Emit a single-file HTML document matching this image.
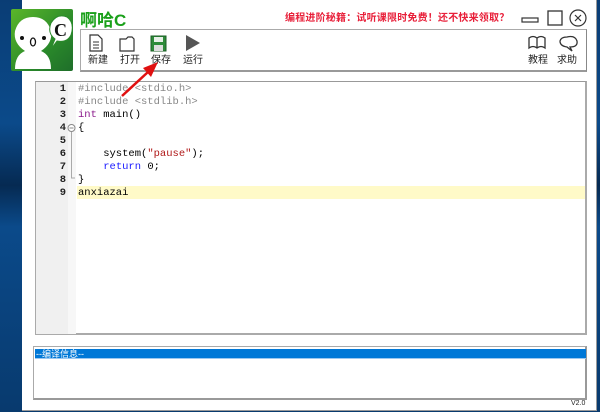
<!DOCTYPE html>
<html><head><meta charset="utf-8"><style>
*{margin:0;padding:0;box-sizing:border-box}
body{width:600px;height:412px;overflow:hidden;position:relative;background:linear-gradient(180deg,#0a3d75 0%,#0b4a8a 30%,#062a52 45%,#0b4a8a 55%,#083a6e 100%);font-family:"Liberation Sans","Noto Sans CJK SC",sans-serif}
.win{position:absolute;left:22px;top:0;width:575px;height:411px;background:#fff;border-right:1px solid #999;border-bottom:1px solid #999}
.abs{position:absolute}
.logo{left:11px;top:9px;width:62px;height:62px;background:linear-gradient(135deg,#5bb62a,#2a8a2a 60%,#1f6e2a);border-radius:2px}
.title{left:80px;top:6px;font-size:17px;font-weight:bold;color:#1aa01a;font-family:"Liberation Sans","Noto Sans CJK SC",sans-serif}
.ad{left:285px;top:9px;font-size:10px;color:#e8203a;font-weight:bold;letter-spacing:0.2px}
.tb{left:80px;top:29px;width:507px;height:43px;border:1px solid #aaa;border-right-color:#888;border-bottom:2px solid #999;background:#fff}
.btn{position:absolute;top:51px;font-size:10px;color:#222}
.editor{left:35px;top:81px;width:552px;height:254px;border:1px solid #aaa;border-top-color:#999;border-right:2px solid #aaa;border-bottom:2px solid #aaa;background:#fff}
.gut{left:36px;top:82px;width:32px;height:252px;background:#f0f0f0}
.fold{left:68px;top:82px;width:8px;height:252px;background:#f7f7f7}
.code{left:78px;top:83px;font-family:"Liberation Mono",monospace;font-size:10.5px;line-height:13px;white-space:pre;color:#000}
.nums{left:40px;top:83px;width:26px;text-align:right;white-space:pre;font-family:"Liberation Mono",monospace;font-size:10.5px;line-height:13px;font-weight:bold;color:#222}
.g{color:#888}.k{color:#8b1a8b}.b{color:#1a1aff}.s{color:#b01818}
.out{left:33px;top:346px;width:554px;height:54px;border:1px solid #aaa;border-right:2px solid #999;border-bottom:2px solid #999;background:#fff}
.hdr{left:35px;top:349px;width:551px;height:10px;background:#0078d7;border-bottom:1px solid #9cc8f0;color:#fff;font-size:9px;line-height:10px;padding-left:1px}
</style></head><body>
<div class="win"></div>
<div class="abs logo">
<svg width="62" height="62" viewBox="0 0 62 62">
<path d="M4 60 Q4 46 14 42 Q2 34 4 22 Q8 8 22 8 Q36 8 40 22 Q42 34 30 42 Q40 46 40 60 Z" fill="#fff"/>
<circle cx="11" cy="29" r="2" fill="#111"/><circle cx="33" cy="29" r="2" fill="#111"/>
<ellipse cx="22" cy="33" rx="2.5" ry="4" fill="none" stroke="#111" stroke-width="1.3"/>
<path d="M40 40 L44 30 Q36 24 40 14 Q46 4 56 8 Q64 14 60 26 Q56 34 46 32 Z" fill="#fff" stroke="#2a8a2a" stroke-width="1"/>
<text x="43" y="27" font-family="Liberation Serif,serif" font-size="18" font-weight="bold" fill="#111">C</text>
</svg></div>
<div class="abs title">啊哈C</div>
<div class="abs ad">编程进阶秘籍：试听课限时免费！还不快来领取？</div>
<svg class="abs" style="left:520px;top:8px" width="70" height="22" viewBox="0 0 70 22">
<rect x="2" y="10" width="16" height="4" fill="none" stroke="#333" stroke-width="1.2"/>
<rect x="28" y="3" width="14" height="14" fill="none" stroke="#333" stroke-width="1.3"/>
<circle cx="58" cy="10" r="8" fill="none" stroke="#333" stroke-width="1.2"/>
<path d="M55 7 L61 13 M61 7 L55 13" stroke="#333" stroke-width="1.2"/>
</svg>
<div class="abs tb"></div>
<svg class="abs" style="left:86px;top:33px" width="120" height="20" viewBox="0 0 120 20">
<path d="M4 2 H12 L16 6 V18 H4 Z" fill="#fff" stroke="#333" stroke-width="1.2"/>
<path d="M7 9 H13 M7 12 H13 M7 15 H13" stroke="#333"/>
<path d="M34 6 H40 L42 4 H46 L48 6 V18 H34 Z" fill="#fff" stroke="#333" stroke-width="1.2"/>
<rect x="65" y="3" width="15" height="15" fill="#2e8b3a" stroke="#1b5e24"/>
<rect x="68" y="4" width="9" height="5" fill="#e8f0e8"/><rect x="68" y="12" width="9" height="6" fill="#ddd"/>
<path d="M100 2 L114 10 L100 18 Z" fill="#555"/>
</svg>
<div class="btn" style="left:88px">新建</div>
<div class="btn" style="left:120px">打开</div>
<div class="btn" style="left:151px">保存</div>
<div class="btn" style="left:183px">运行</div>
<svg class="abs" style="left:527px;top:34px" width="55" height="18" viewBox="0 0 55 18">
<path d="M2 4 Q6 1 10 4 Q14 1 18 4 V14 Q14 11 10 14 Q6 11 2 14 Z M10 4 V14" fill="none" stroke="#333" stroke-width="1.3"/>
<path d="M40 3 Q48 1 50 7 Q51 13 43 13 L45 17 L40 13 Q33 12 33 7 Q34 3 40 3Z" fill="none" stroke="#333" stroke-width="1.3"/>
</svg>
<div class="btn" style="left:528px">教程</div>
<div class="btn" style="left:557px">求助</div>
<div class="abs editor"></div>
<div class="abs gut"></div>
<div class="abs fold"></div>
<div class="abs" style="left:77px;top:186px;width:508px;height:13px;background:#fffac8"></div>
<svg class="abs" style="left:67px;top:121px" width="10" height="66" viewBox="0 0 10 66">
<circle cx="4.5" cy="7" r="3.5" fill="#fff" stroke="#888"/><path d="M2.5 7 H6.5" stroke="#888"/>
<path d="M4.5 11 V57 H8" fill="none" stroke="#aaa"/>
</svg>
<div class="abs nums">1
2
3
4
5
6
7
8
9</div>
<div class="abs code"><span class="g">#include &lt;stdio.h&gt;</span>
<span class="g">#include &lt;stdlib.h&gt;</span>
<span class="k">int</span> main()
{

    system(<span class="s">"pause"</span>);
    <span class="b">return</span> 0;
}
anxiazai</div>
<svg class="abs" style="left:118px;top:56px" width="45" height="45" viewBox="0 0 45 45">
<path d="M4 40 L30 16" stroke="#e01010" stroke-width="2.5"/>
<path d="M40 6 L25 12 L33 21 Z" fill="#e01010"/>
</svg>
<div class="abs out"></div>
<div class="abs hdr">--编译信息--</div>
<div class="abs" style="left:571px;top:400px;font-size:7px;color:#222">V2.0</div>
</body></html>
